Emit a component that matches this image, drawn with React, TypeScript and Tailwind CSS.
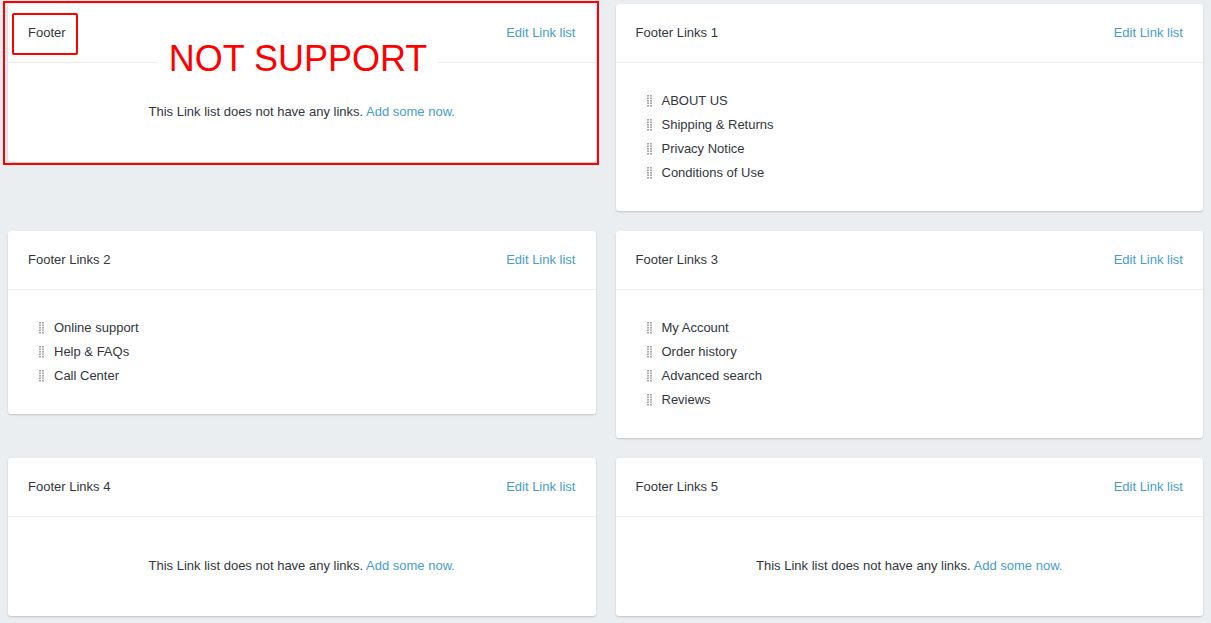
import React from "react";

type Card = { title: string; links: string[]; annotated?: boolean };

const rows: Card[][] = [
  [
    { title: "Footer", links: [], annotated: true },
    { title: "Footer Links 1", links: ["ABOUT US", "Shipping & Returns", "Privacy Notice", "Conditions of Use"] },
  ],
  [
    { title: "Footer Links 2", links: ["Online support", "Help & FAQs", "Call Center"] },
    { title: "Footer Links 3", links: ["My Account", "Order history", "Advanced search", "Reviews"] },
  ],
  [
    { title: "Footer Links 4", links: [] },
    { title: "Footer Links 5", links: [] },
  ],
];

function Handle() {
  const ys = [0, 2.5, 5, 7.5, 10];
  return (
    <svg width="5" height="12" viewBox="0 0 5 12" className="shrink-0">
      {ys.map((y) => (
        <g key={y} fill="#a8a8a8">
          <rect x="0" y={y} width="2" height="1.6" />
          <rect x="3" y={y} width="2" height="1.6" />
        </g>
      ))}
    </svg>
  );
}

function LinkCard({ card }: { card: Card }) {
  return (
    <div className="relative rounded-[3px] bg-white shadow-[0_1px_2px_rgba(0,0,0,0.18)]">
      <div className="flex items-center justify-between px-5 py-5 text-[13px] leading-[18px]">
        <span className="text-[#31373d]">{card.title}</span>
        <a className="text-[#479ccf]">Edit Link list</a>
      </div>
      <div className="h-px bg-[#ebeef0]" />
      {card.links.length === 0 ? (
        <div className="pt-[39px] pb-[40px] text-center text-[13px] leading-[20px] text-[#31373d]">
          This Link list does not have any links. <a className="text-[#479ccf]">Add some now.</a>
        </div>
      ) : (
        <ul className="pt-[26px] pb-[26px] pl-[31px]">
          {card.links.map((l) => (
            <li key={l} className="flex items-center gap-[10px] text-[13px] leading-[24px] text-[#31373d]">
              <Handle />
              <span>{l}</span>
            </li>
          ))}
        </ul>
      )}
      {card.annotated && (
        <>
          <div className="pointer-events-none absolute -left-[5px] -top-[3px] -right-[3px] -bottom-[3px] border-2 border-[#ff0000]" />
          <div className="pointer-events-none absolute left-[4px] top-[9px] h-[42px] w-[66px] rounded-[2px] border-2 border-[#ff0000]" />
          <div className="pointer-events-none absolute left-[150px] top-[37px] w-[280px] bg-white text-center text-[36px] leading-none text-[#ff0000]">
            NOT SUPPORT
          </div>
        </>
      )}
    </div>
  );
}

export default function App() {
  return (
    <div
      className="min-h-[623px] bg-[#ebeef0] px-2 pt-1"
      style={{ fontFamily: '"Liberation Sans", Arial, sans-serif' }}
    >
      <div className="flex flex-col gap-5">
        {rows.map((row, i) => (
          <div key={i} className="grid grid-cols-2 items-start gap-5">
            {row.map((c) => (
              <LinkCard key={c.title} card={c} />
            ))}
          </div>
        ))}
      </div>
    </div>
  );
}
